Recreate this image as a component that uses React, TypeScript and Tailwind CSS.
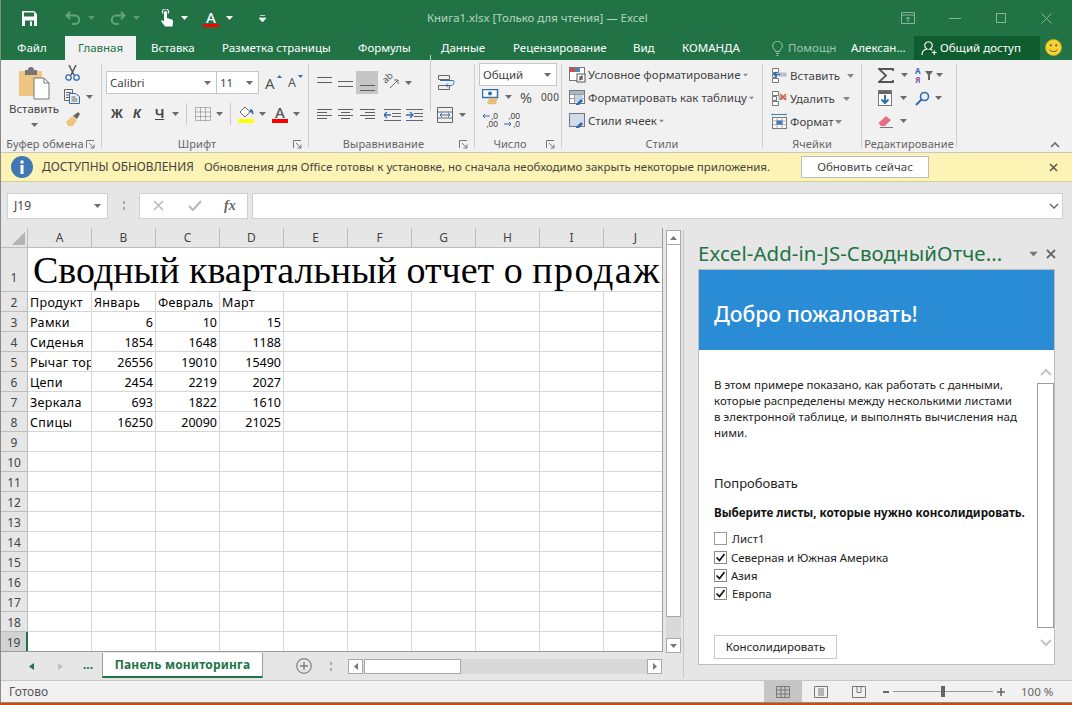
import React from "react";

const Caret = ({ c = "#6b6b6b", className = "" }: { c?: string; className?: string }) => (
  <svg width="7" height="4" viewBox="0 0 7 4" className={"shrink-0 " + className}><path d="M0 0h7L3.5 4z" fill={c} /></svg>
);
const Launcher = ({ className = "" }: { className?: string }) => (
  <svg width="9" height="9" viewBox="0 0 9 9" className={className}><path d="M.5 8V.5H8M3 3l5 5M8 4.5V8H4.5" fill="none" stroke="#777" /></svg>
);
const Lines = ({ rows, w = 15 }: { rows: [number, number][]; w?: number }) => (
  <svg width={w} height="14" viewBox={`0 0 ${w} 14`} className="shrink-0">
    {rows.map(([x1, x2], i) => (
      <path key={i} d={`M${x1} ${i * 3 + 1.5 + (4 - rows.length) * 3}H${x2}`} stroke="#5f5f5f" />
    ))}
  </svg>
);
const VAlign = ({ y }: { y: number }) => (
  <svg width="15" height="20" viewBox="0 0 15 20" className="shrink-0"><path d={`M0 ${y + 0.5}H15M0 ${y + 5.5}H15`} stroke="#5f5f5f" /></svg>
);
const Sep = ({ h = "h-[24px]", m = "mx-[5px]" }: { h?: string; m?: string }) => <div className={`${h} ${m} w-px bg-[#c8c8c8] shrink-0`} />;

const Group = ({ w, label, launcher, pr = "", children }: { w: string; label: string; launcher?: boolean; pr?: string; children: React.ReactNode }) => (
  <div className={`${w} h-[84px] shrink-0 border-r border-[#d0d0d0] flex flex-col`}>
    <div className="h-[72px] shrink-0">{children}</div>
    <div className={`h-[16px] shrink-0 flex items-center justify-center relative text-[11px] leading-[16px] text-[#666] tracking-[0.1px] ${pr}`}>
      {label}
      {launcher && <Launcher className="absolute right-[6px] top-[4px]" />}
    </div>
  </div>
);

const Combo = ({ w, text, cls = "" }: { w: string; text: string; cls?: string }) => (
  <div className={`${w} h-[23px] bg-white border border-[#c6c6c6] flex items-center pl-[3px] pr-[5px] justify-between text-[11.5px] text-[#444] ${cls}`}>
    <span>{text}</span>
    <Caret />
  </div>
);

const StyleIcon = ({ kind }: { kind: number }) => (
  <svg width="17" height="16" viewBox="0 0 17 16" className="shrink-0">
    <rect x=".5" y=".5" width="15" height="13" fill={kind === 2 ? "#cfdcec" : "#fff"} stroke="#777" />
    {kind === 0 && <><rect x="1" y="1" width="5" height="4" fill="#c8553b" /><rect x="6" y="1" width="5" height="4" fill="#4a86c5" /><rect x="8" y="7" width="8" height="8" fill="#fff" stroke="#555" /><path d="M10 10h4M10 12h4M13 8.5l-2 5" stroke="#333" /></>}
    {kind === 1 && <><path d="M1 4.5h14M1 8.5h14M5.5 1v12M10.5 1v12" stroke="#999" /><rect x="1" y="1" width="14" height="3" fill="#aab8c8" /><rect x="6" y="5" width="8" height="7" fill="#c0d2e6" /><path d="M7 14l5-5 2 2-4 4H7z" fill="#2f6db5" /></>}
    {kind === 2 && <path d="M7 14l5-5 2 2-4 4H7z" fill="#2f6db5" />}
  </svg>
);

const CellIcon = ({ kind }: { kind: number }) => (
  <svg width="17" height="17" viewBox="0 0 17 17" className="shrink-0">
    {kind < 2 && <><path d="M1.5 1.5h6v4h-6zM1.5 11.5h6v4h-6zM1.5 6.5h4v4h-4z" fill="#fff" stroke="#777" /><rect x="8" y="6" width="7" height="3" fill={kind === 0 ? "#b8cce4" : "#bbb"} stroke="#888" strokeWidth=".5" /></>}
    {kind === 0 && <path d="M9 7.5H3M5.5 5l-2.5 2.5L5.500 10" stroke="#2f6db5" strokeWidth="1.500" fill="none" />}
    {kind === 1 && <path d="M9 4l6 6M15 4l-6 6" stroke="#d9603f" strokeWidth="1.600" />}
    {kind === 2 && <><path d="M1 1.500h14M1 .5v2M15 .5v2" stroke="#3f7cbf" /><rect x="1.500" y="4.500" width="14" height="11" fill="#fff" stroke="#777" /><path d="M1.500 8h14M1.500 11.500h14M6 4.500v11M11 4.500v11" stroke="#aaa" /><rect x="5.500" y="7.500" width="6" height="4" fill="#3f7cbf" /></>}
  </svg>
);

const colLetters = ["A", "B", "C", "D", "E", "F", "G", "H", "I", "J"];
const table: Record<number, (string | number)[]> = {
  2: ["Продукт", "Январь", "Февраль", "Март"],
  3: ["Рамки", 6, 10, 15],
  4: ["Сиденья", 1854, 1648, 1188],
  5: ["Рычаг тор", 26556, 19010, 15490],
  6: ["Цепи", 2454, 2219, 2027],
  7: ["Зеркала", 693, 1822, 1610],
  8: ["Спицы", 16250, 20090, 21025],
};

const cellBorder = "border-r border-b border-[#d6d6d6]";

const Sheet = () => (
  <div className="w-[662px] h-[424px] overflow-hidden border-r border-b border-[#9c9c9c] bg-white grid grid-cols-[27px_repeat(10,64px)] grid-rows-[20px_44px_repeat(18,20px)] text-[12.5px] text-black">
    <div className="bg-[#e6e6e6] border-r border-b border-[#bcbcbc] flex items-end justify-end p-[2px]">
      <svg width="13" height="13" viewBox="0 0 13 13"><path d="M13 0v13H0z" fill="#b3b3b3" /></svg>
    </div>
    {colLetters.map((c) => (
      <div key={c} className="bg-[#e6e6e6] border-r border-b border-[#bcbcbc] flex items-center justify-center text-[#444] text-[12px]">{c}</div>
    ))}
    <div className="bg-[#e6e6e6] border-r border-b border-[#bcbcbc] flex items-end justify-center text-[12px] text-[#444] pb-[4px]">1</div>
    <div className="col-span-10 border-b border-[#d6d6d6] overflow-hidden whitespace-nowrap pl-[5px] text-[38px] leading-[44px] font-['Liberation_Serif',serif]">
      Сводный квартальный отчет о <span className="tracking-[1.5px]">продажах</span>
    </div>
    {Array.from({ length: 18 }, (_, i) => i + 2).map((r) => (
      <React.Fragment key={r}>
        <div className={`border-b flex items-center justify-center pt-[2px] text-[12px] text-[#444] ${r === 19 ? "bg-[#d2d2d2] border-r-2 border-r-[#217346] border-b-[#bcbcbc]" : "bg-[#e6e6e6] border-r border-[#bcbcbc]"}`}>{r}</div>
        {colLetters.map((_, c) => {
          const v = table[r]?.[c];
          const num = typeof v === "number";
          return (
            <div key={c} className={`${cellBorder} ${num ? "text-right pr-[2px]" : "pl-[2px] tracking-[0.35px]"} leading-[21px] whitespace-nowrap overflow-hidden`}>
              {v ?? ""}
            </div>
          );
        })}
      </React.Fragment>
    ))}
  </div>
);

const Box = ({ checked, label, ml = "ml-[4px]", h = "h-[18px]" }: { checked?: boolean; label: string; ml?: string; h?: string }) => (
  <div className={`flex items-start ${h}`}>
    <svg width="13" height="13" viewBox="0 0 13 13" className="shrink-0 mt-[2px]">
      <rect x=".5" y=".5" width="12" height="12" fill="#fff" stroke={checked ? "#8a8a8a" : "#9a9a9a"} />
      {checked && <path d="M2.500 6.500l3 3 5-6.500" fill="none" stroke="#111" strokeWidth="1.700" />}
    </svg>
    <span className={`${ml} text-[11.4px] leading-[18px] text-[#222]`}>{label}</span>
  </div>
);

export default function App() {
  return (
    <div className="w-[1072px] h-[705px] overflow-hidden flex flex-col font-['Noto_Sans',sans-serif] bg-[#c85000]">
      <div className="h-[703px] border-l border-b border-[#8a8a8a] flex flex-col bg-[#e6e6e6]">
        {/* title bar */}
        <div className="h-[36px] bg-[#217346] flex items-center shrink-0">
          <div className="w-[426px] flex items-center shrink-0">
            <svg width="15" height="15" viewBox="0 0 15 15" className="ml-[21px]">
              <path d="M0 0h12l3 3v12H0z" fill="#fff" /><rect x="2" y="1.500" width="10" height="4" fill="#217346" /><rect x="3" y="9.500" width="9" height="5.500" fill="#217346" /><rect x="8" y="10.500" width="2" height="4.500" fill="#fff" />
            </svg>
            <svg width="16" height="14" viewBox="0 0 16 14" className="ml-[28px]"><path d="M5 1L1.500 4.500 5 8M2 4.500h8a4.200 4.200 0 0 1 0 8.500H7" fill="none" stroke="#63a27f" strokeWidth="2" /></svg>
            <Caret c="#5c9a78" className="ml-[7px]" />
            <svg width="16" height="14" viewBox="0 0 16 14" className="ml-[15px]"><path d="M11 1l3.500 3.500L11 8M14 4.500H6a4.200 4.200 0 0 0 0 8.500h3" fill="none" stroke="#63a27f" strokeWidth="2" /></svg>
            <Caret c="#5c9a78" className="ml-[7px]" />
            <svg width="16" height="18" viewBox="0 0 16 18" className="ml-[19px]">
              <path d="M4 4.500a3 3 0 1 1 5 0" fill="none" stroke="#fff" strokeWidth="1.200" />
              <path d="M5 3.500a1.300 1.300 0 0 1 3 0V9l5 1.500c1 .5 1 1.500 1 2.500l-.5 4.500H6L2 12l1-1 2 1.500z" fill="#fff" />
            </svg>
            <Caret c="#fff" className="ml-[6px]" />
            <div className="ml-[15px] w-[16px] h-[17px] flex flex-col items-center">
              <span className="text-[15px] leading-[14px] text-white font-medium">A</span>
              <div className="w-[16px] h-[3px] bg-[#ff0000]" />
            </div>
            <Caret c="#fff" className="ml-[7px]" />
            <svg width="7" height="7" viewBox="0 0 7 7" className="ml-[26px]"><path d="M1 .5h5M0 3h7L3.500 7z" stroke="#fff" strokeWidth=".700" fill="#fff" /></svg>
          </div>
          <div className="text-[11.4px] text-[#b5d3c1] whitespace-nowrap">Книга1.xlsx [Только для чтения] — Excel</div>
          <div className="ml-auto flex items-center">
            <svg width="14" height="12" viewBox="0 0 14 12"><path d="M.5.500h13v11H.500zM.5 3h13M7 10V5M5 7l2-2 2 2" fill="none" stroke="#86b59b" /></svg>
            <div className="w-[12px] h-px bg-[#86b59b] ml-[34px]" />
            <div className="w-[10px] h-[10px] border border-[#86b59b] ml-[35px]" />
            <svg width="11" height="11" viewBox="0 0 11 11" className="ml-[35px] mr-[20px]"><path d="M.5.500l10 10M10.500.500l-10 10" stroke="#86b59b" /></svg>
          </div>
        </div>
        {/* tabs */}
        <div className="h-[24px] bg-[#217346] flex items-stretch shrink-0 text-[11.5px] text-white leading-[24px] whitespace-nowrap">
          <span className="ml-[16px] w-[28px]">Файл</span>
          <span className="ml-[20px] w-[71px] bg-[#f1f1f1] text-[#217346] text-center">Главная</span>
          <span className="ml-[15px] w-[42px]">Вставка</span>
          <span className="ml-[29px] w-[107px]">Разметка страницы</span>
          <span className="ml-[29px] w-[54px]">Формулы</span>
          <span className="ml-[29px] w-[43px]">Данные</span>
          <span className="ml-[29px] w-[91px]">Рецензирование</span>
          <span className="ml-[29px] w-[20px]">Вид</span>
          <span className="ml-[29px] w-[61px]">КОМАНДА</span>
          <div className="ml-[29px] flex items-center w-[64px] overflow-hidden text-[#9cc7ae]">
            <svg width="11" height="15" viewBox="0 0 11 15" className="shrink-0 mr-[5px]"><path d="M3.500 10.500C3 8 .7 7.500.7 5a4.800 4.800 0 0 1 9.600 0c0 2.500-2.300 3-2.800 5.500zM4 12.500h3M4.500 14.500h2" fill="none" stroke="#9cc7ae" /></svg>
            <span>Помощник</span>
          </div>
          <span className="ml-[15px] w-[63px]">Алексан...</span>
          <div className="w-[126px] bg-[#0f5c2f] flex items-center pl-[7px]">
            <svg width="16" height="16" viewBox="0 0 16 16" className="mr-[3px]"><path d="M1 15c0-3.500 2-5.500 5-6a3.800 3.800 0 1 1 3 0c1 .2 1.700.7 2.300 1.300M11 12.500h4.500M13.200 10.300V15" fill="none" stroke="#fff" strokeWidth="1.100" /></svg>
            <span>Общий доступ</span>
          </div>
          <svg width="17" height="17" viewBox="0 0 17 17" className="ml-[5px] mt-[3px]">
            <circle cx="8.500" cy="8.500" r="8" fill="#f6d32d" stroke="#d8ae1a" strokeWidth=".700" /><circle cx="5.800" cy="6.300" r="1.100" fill="#555" /><circle cx="11.200" cy="6.300" r="1.100" fill="#555" /><path d="M4.500 10.500c1.500 2.700 6.500 2.700 8 0" fill="none" stroke="#555" />
          </svg>
        </div>
        {/* ribbon */}
        <div className="h-[93px] bg-[#f1f1f1] border-b border-[#c6c6c6] pt-[4px] flex shrink-0 text-[#444] text-[11.5px] whitespace-nowrap">
          <Group w="w-[101px]" label="Буфер обмена" launcher pr="pr-[12px]">
            <div className="flex h-full">
              <div className="w-[62px] flex flex-col items-center pl-[4px]">
                <svg width="31" height="33" viewBox="0 0 31 33" className="mt-[3px]">
                  <path d="M0 4h23v25H0z" fill="#eec681" /><path d="M6 3h3a3 3 0 0 1 6 0h3v5H6z" fill="#767676" /><path d="M15 11h10l5 5v16H15z" fill="#fff" stroke="#777" /><path d="M25 11v5h5" fill="none" stroke="#777" />
                </svg>
                <span className="mt-[1px] leading-[16px]">Вставить</span>
                <Caret className="mt-[6px]" />
              </div>
              <div className="flex flex-col pl-[1px]">
                <svg width="16" height="16" viewBox="0 0 16 16" className="mt-[1px] ml-[1px]">
                  <path d="M4 0l5 10M11 0L6 10" stroke="#555" strokeWidth="1.500" /><circle cx="3.500" cy="12.500" r="2.700" fill="none" stroke="#2f6db5" strokeWidth="1.300" /><circle cx="11.500" cy="12.500" r="2.700" fill="none" stroke="#2f6db5" strokeWidth="1.300" />
                </svg>
                <div className="flex items-center mt-[8px]">
                  <svg width="16" height="15" viewBox="0 0 16 15"><path d="M.5.500h8v11h-8zM2 3.500h5M2 6h5M2 8.500h5" fill="none" stroke="#666" /><path d="M5.500 4.500h6l4 3v7h-10z" fill="#f1f1f1" stroke="#2f6db5" /><path d="M7.500 8h4M7.500 10h6M7.500 12h6" stroke="#666" /></svg>
                  <Caret className="ml-[6px]" />
                </div>
                <svg width="17" height="16" viewBox="0 0 17 16" className="mt-[7px]"><path d="M2 11l6-6 5 4-4 6H4z" fill="#eec681" /><path d="M9 5l5-4 2 2-3 5z" fill="#666" /></svg>
              </div>
            </div>
          </Group>
          <Group w="w-[207px]" label="Шрифт" launcher pr="pr-[16px]">
            <div className="pl-[4px] pt-[7px]">
              <div className="flex items-center h-[23px]">
                <Combo w="w-[111px]" text="Calibri" />
                <Combo w="w-[43px]" text="11" cls="-ml-px" />
                <span className="ml-[6px] relative w-[14px] text-[15px] leading-[20px] text-[#555]">A<svg width="5" height="3" viewBox="0 0 5 3" className="absolute right-[-3px] top-[2px]"><path d="M0 3h5L2.500 0z" fill="#2f6db5" /></svg></span>
                <span className="ml-[9px] relative w-[12px] text-[12.500px] leading-[20px] text-[#555]">A<svg width="5" height="3" viewBox="0 0 5 3" className="absolute right-[-3px] top-[2px]"><path d="M0 0h5L2.500 3z" fill="#2f6db5" /></svg></span>
              </div>
              <div className="flex items-center h-[22px] mt-[9px] font-['Liberation_Sans',sans-serif]">
                <span className="ml-[5px] w-[14px] font-bold text-[13px] text-[#444]">Ж</span>
                <span className="ml-[8px] w-[10px] font-bold italic text-[13px] text-[#444]">К</span>
                <span className="ml-[12px] w-[10px] font-bold text-[13px] text-[#444] underline">Ч</span>
                <Caret className="ml-[7px]" />
                <Sep h="h-[22px]" m="ml-[7px] mr-[8px]" />
                <svg width="16" height="14" viewBox="0 0 16 14"><path d="M.5.500h15v13H.500zM5.500.500v13M10.500.500v13M.5 5h15M.5 9.500h15" fill="none" stroke="#777" strokeDasharray="1 1" /></svg>
                <Caret className="ml-[5px]" />
                <Sep h="h-[22px]" m="ml-[7px] mr-[6px]" />
                <div className="w-[18px] flex flex-col items-center">
                  <svg width="15" height="13" viewBox="0 0 15 13"><path d="M1 6l5-5 5 5-5 5z" fill="#fff" stroke="#666" /><path d="M6 1V0M11 3c3 0 4 3 3 6-1-2-2-3-3-3z" fill="#2f6db5" /></svg>
                  <div className="w-[16px] h-[4px] bg-[#ffff00]" />
                </div>
                <Caret className="ml-[4px]" />
                <div className="ml-[6px] w-[16px] flex flex-col items-center">
                  <span className="text-[15px] leading-[13px] text-[#555] font-['Noto_Sans',sans-serif] font-medium">A</span>
                  <div className="w-[16px] h-[4px] bg-[#ff0000]" />
                </div>
                <Caret className="ml-[5px]" />
              </div>
            </div>
          </Group>
          <Group w="w-[166px]" label="Выравнивание" launcher pr="pr-[16px]">
            <div className="flex pl-[8px]">
              <div className="pt-[7px] flex flex-col">
                <div className="flex items-center h-[23px]">
                  <VAlign y={4} />
                  <span className="w-[6px]" />
                  <div className="w-[16px]"><VAlign y={8} /></div>
                  <div className="w-[22px] h-[23px] bg-[#c6c6c6] flex items-center justify-center ml-[2px]"><VAlign y={12} /></div>
                  <div className="w-[17px] h-[17px] ml-[5px] relative">
                    <span className="absolute left-[-1px] top-[-2px] text-[9.5px] leading-[12px] text-[#555] rotate-[-45deg]">ab</span>
                    <svg width="17" height="17" viewBox="0 0 17 17" className="absolute left-0 top-0"><path d="M7 14l8-8M15 6h-4M15 6v4" stroke="#666" fill="none" /></svg>
                  </div>
                  <Caret className="ml-[5px]" />
                  <Sep h="h-[56px]" m="ml-[18px] mr-[7px]" />
                  <svg width="17" height="16" viewBox="0 0 17 16"><path d="M.5.500h11v4h-11zM.5 10.500h11v4h-11z" fill="none" stroke="#666" /><path d="M2 5.500h13c2 0 1 5-2 5H8M10 8.500l-2 2 2 2" fill="none" stroke="#2f6db5" /></svg>
                </div>
                <div className="flex items-center h-[23px] mt-[9px]">
                  <Lines rows={[[0, 15], [0, 10], [0, 15], [0, 10]]} />
                  <span className="w-[6px]" />
                  <Lines rows={[[0, 15], [3, 12], [0, 15], [3, 12]]} />
                  <span className="w-[7px]" />
                  <Lines rows={[[0, 15], [5, 15], [0, 15], [5, 15]]} />
                  <svg width="17" height="14" viewBox="0 0 17 14" className="ml-[9px]"><path d="M0 1.500h17M8 5.500h9M8 8.500h9M0 12.500h17" stroke="#666" /><path d="M0 7h7M3 4L0 7l3 3" fill="none" stroke="#2f6db5" strokeWidth="1.300" /></svg>
                  <svg width="17" height="14" viewBox="0 0 17 14" className="ml-[5px]"><path d="M0 1.500h17M8 5.500h9M8 8.500h9M0 12.500h17" stroke="#666" /><path d="M0 7h7M4 4l3 3-3 3" fill="none" stroke="#2f6db5" strokeWidth="1.300" /></svg>
                  <span className="w-[14px]" />
                  <svg width="17" height="16" viewBox="0 0 17 16"><path d="M.5.500h15v15H.500zM.5 5h15M.5 11h15" fill="none" stroke="#666" /><path d="M3 8h10M5 6L3 8l2 2M11 6l2 2-2 2" fill="none" stroke="#2f6db5" /></svg>
                  <Caret className="ml-[5px]" />
                </div>
              </div>
            </div>
          </Group>
          <Group w="w-[87px]" label="Число" launcher pr="pr-[16px]">
            <div className="pl-[4px]">
              <Combo w="w-[78px]" text="Общий" cls="mt-[-1px]" />
              <div className="flex items-center h-[18px] mt-[2px] pl-[3px]">
                <svg width="17" height="17" viewBox="0 0 17 17"><rect x=".5" y=".5" width="15" height="8" fill="#fff" stroke="#2f6db5" strokeWidth="1.500" /><circle cx="8" cy="4.500" r="2" fill="#2f6db5" /><ellipse cx="11" cy="10.500" rx="4.500" ry="1.500" fill="#eec681" stroke="#c99a44" strokeWidth=".500" /><ellipse cx="10" cy="13.500" rx="4.500" ry="1.500" fill="#eec681" stroke="#c99a44" strokeWidth=".500" /></svg>
                <Caret className="ml-[6px]" />
                <span className="ml-[8px] w-[16px] text-[14.500px] leading-none text-[#555]">%</span>
                <span className="ml-[5px] text-[10px] leading-none text-[#444] tracking-[0.4px]">000</span>
              </div>
              <div className="flex items-center h-[18px] mt-[5px] pl-[3px] font-['Liberation_Sans',sans-serif]">
                <div className="w-[16px] relative text-[8.500px] leading-[8px] text-[#444] text-right"><div>,0</div><div>,00</div><svg width="8" height="6" viewBox="0 0 8 6" className="absolute left-0 top-[1px]"><path d="M8 3H1M3 1L1 3l2 2" stroke="#2f6db5" fill="none" /></svg></div>
                <div className="ml-[6px] w-[16px] relative text-[8.500px] leading-[8px] text-[#444] text-right"><div>,00</div><div>,0</div><svg width="8" height="6" viewBox="0 0 8 6" className="absolute left-0 top-[9px]"><path d="M0 3h7M5 1l2 2-2 2" stroke="#2f6db5" fill="none" /></svg></div>
              </div>
            </div>
          </Group>
          <Group w="w-[201px]" label="Стили">
            <div className="pl-[7px] pt-[3px] flex flex-col gap-[7px]">
              {["Условное форматирование", "Форматировать как таблицу", "Стили ячеек"].map((t, i) => (
                <div key={t} className="flex items-center h-[16px] leading-[16px]">
                  <StyleIcon kind={i} />
                  <span className="ml-[2px]">{t}</span>
                  <Caret c="#888" className="ml-[1px] scale-75" />
                </div>
              ))}
            </div>
          </Group>
          <Group w="w-[99px]" label="Ячейки">
            <div className="pl-[8px] pt-[3px] flex flex-col gap-[6px]">
              {[["Вставить", "ml-[7px]"], ["Удалить", "ml-[8px]"], ["Формат", "ml-[1px]"]].map(([t, m], i) => (
                <div key={t} className="flex items-center h-[17px] leading-[16px]">
                  <CellIcon kind={i} />
                  <span className="ml-[2px]">{t}</span>
                  <Caret c="#888" className={m} />
                </div>
              ))}
            </div>
          </Group>
          <Group w="w-[95px]" label="Редактирование">
            <div className="flex pl-[16px]">
              <div className="w-[37px] flex flex-col">
                <div className="flex items-center h-[20px] mt-[1px]"><svg width="16" height="15" viewBox="0 0 16 15"><path d="M15 3V1H1l7 6.500L1 14h14v-2" fill="none" stroke="#555" strokeWidth="1.800" /></svg><Caret className="ml-[7px]" /></div>
                <div className="flex items-center h-[20px] mt-[3px]"><svg width="15" height="16" viewBox="0 0 15 16"><rect x=".5" y=".5" width="13" height="15" fill="#fff" stroke="#777" /><rect x="1" y="1" width="12" height="3" fill="#666" /><path d="M7 5v8M3.500 9.500L7 13l3.500-3.500" fill="none" stroke="#2f6db5" strokeWidth="2" /></svg><Caret className="ml-[7px]" /></div>
                <div className="flex items-center h-[20px] mt-[3px]"><svg width="15" height="14" viewBox="0 0 15 14"><path d="M.5 9L8 2l5 4-6 6H3z" fill="#e46f83" /><path d="M2 13.500h13" stroke="#777" /></svg><Caret className="ml-[7px]" /></div>
              </div>
              <div className="flex flex-col">
                <div className="flex items-center h-[20px] mt-[1px]">
                  <div className="w-[9px] text-[8px] leading-[9px] font-bold"><div className="text-[#2f6db5]">А</div><div className="text-[#8e5aa8]">Я</div></div>
                  <svg width="8" height="9" viewBox="0 0 8 9" className="ml-[1px]"><path d="M0 0h8L5 4v5H3V4z" fill="#666" /></svg>
                  <Caret className="ml-[3px]" />
                </div>
                <div className="flex items-center h-[20px] mt-[3px]"><svg width="15" height="15" viewBox="0 0 15 15"><circle cx="9.500" cy="5.500" r="4" fill="none" stroke="#2f6db5" strokeWidth="1.600" /><path d="M6.500 8.500L1 14" stroke="#2f6db5" strokeWidth="2" /></svg><Caret className="ml-[5px]" /></div>
              </div>
            </div>
          </Group>
          <svg width="10" height="6" viewBox="0 0 10 6" className="ml-[93px] mt-[78px]"><path d="M1 5l4-4 4 4" fill="none" stroke="#666" strokeWidth="1.600" /></svg>
        </div>
        {/* update bar */}
        <div className="h-[29px] bg-[#fcf3b4] border-b border-[#d8cf96] flex items-center shrink-0 text-[11.5px] text-[#444] whitespace-nowrap">
          <svg width="22" height="22" viewBox="0 0 22 22" className="ml-[10px] shrink-0"><circle cx="11" cy="11" r="11" fill="#3f78b5" /><rect x="9.500" y="9" width="3" height="9" fill="#fff" /><rect x="9.500" y="4.500" width="3" height="3" fill="#fff" /></svg>
          <span className="ml-[9px] w-[152px] text-[11.85px]">ДОСТУПНЫ ОБНОВЛЕНИЯ</span>
          <span className="ml-[10px] w-[567px]">Обновления для Office готовы к установке, но сначала необходимо закрыть некоторые приложения.</span>
          <div className="ml-[30px] w-[128px] h-[22px] bg-white border border-[#bdbdbd] flex items-center justify-center">Обновить сейчас</div>
          <svg width="9" height="9" viewBox="0 0 9 9" className="ml-[120px]"><path d="M1 1l7 7M8 1L1 8" stroke="#555" strokeWidth="1.500" /></svg>
        </div>
        {/* formula bar */}
        <div className="h-[46px] flex items-center shrink-0 pl-[6px] pt-[1px] bg-[#e6e6e6]">
          <div className="w-[101px] h-[26px] bg-white border border-[#cfcfcf] flex items-center justify-between pl-[6px] pr-[6px] text-[12px] text-[#444]"><span>J19</span><Caret /></div>
          <div className="w-[31px] flex justify-center"><div className="w-[2px] h-[9px] border-y-[3px] border-[#aaa] bg-[#e6e6e6]" /></div>
          <div className="w-[109px] h-[26px] bg-white border border-[#cfcfcf] flex items-center pl-[13px]">
            <svg width="11" height="11" viewBox="0 0 11 11"><path d="M1 1l9 9M10 1l-9 9" stroke="#b8b8b8" strokeWidth="1.500" /></svg>
            <svg width="14" height="11" viewBox="0 0 14 11" className="ml-[24px]"><path d="M1 6l4 4 8-9" fill="none" stroke="#b8b8b8" strokeWidth="2" /></svg>
            <span className="ml-[22px] text-[14px] italic font-['Liberation_Serif',serif] text-[#666] font-bold">fx</span>
          </div>
          <div className="ml-[4px] w-[811px] h-[26px] bg-white border border-[#cfcfcf] flex items-center justify-end pr-[3px]">
            <svg width="10" height="6" viewBox="0 0 10 6"><path d="M1 1l4 4 4-4" fill="none" stroke="#666" strokeWidth="1.400" /></svg>
          </div>
        </div>
        {/* workspace */}
        <div className="h-[452px] flex shrink-0">
          <div className="w-[684px] flex flex-col shrink-0 relative">
            <div className="flex h-[425px]">
              <Sheet />
              <div className="ml-[3px] w-[15px] h-[423px] mt-[2px] flex flex-col shrink-0">
                <div className="h-[15px] bg-white border border-[#a8a8a8] flex items-center justify-center"><svg width="7" height="4" viewBox="0 0 7 4"><path d="M0 4h7L3.500 0z" fill="#777" /></svg></div>
                <div className="flex-1 bg-white border-x border-b border-[#a8a8a8]" />
                <div className="h-[21px] bg-[#d9d9d9]" />
                <div className="h-[15px] bg-white border border-[#a8a8a8] flex items-center justify-center"><Caret c="#777" /></div>
              </div>
              <div className="ml-[2px] w-px h-[448px] mt-[2px] bg-[#c8c8c8] shrink-0" />
            </div>
            {/* sheet tabs */}
            <div className="h-[27px] flex text-[12px]">
              <svg width="5" height="7" viewBox="0 0 5 7" className="ml-[28px] mt-[10px]"><path d="M5 0v7L0 3.500z" fill="#217346" /></svg>
              <svg width="5" height="7" viewBox="0 0 5 7" className="ml-[24px] mt-[10px]"><path d="M0 0v7l5-3.500z" fill="#c0c0c0" /></svg>
              <span className="ml-[20px] w-[19px] mt-[4px] font-bold text-[#217346] leading-[16px]">...</span>
              <div className="w-[161px] h-[25px] bg-white border-x border-[#9c9c9c] border-b-2 border-b-[#217346] flex items-center justify-center font-bold text-[#217346] tracking-[0.2px]">Панель мониторинга</div>
              <svg width="16" height="16" viewBox="0 0 16 16" className="ml-[33px] mt-[5px]"><circle cx="8" cy="8" r="7.300" fill="none" stroke="#808080" strokeWidth="1.200" /><path d="M8 4v8M4 8h8" stroke="#808080" strokeWidth="1.400" /></svg>
              <div className="ml-[18px] mt-[9px] w-[2px] h-[9px] border-y-[3px] border-[#aaa]" />
              <div className="ml-[16px] mt-[6px] w-[314px] h-[15px] bg-[#d9d9d9] flex">
                <div className="w-[15px] bg-white border border-[#a8a8a8] flex items-center justify-center"><svg width="4" height="7" viewBox="0 0 4 7"><path d="M4 0v7L0 3.500z" fill="#777" /></svg></div>
                <div className="w-[97px] ml-px bg-white border border-[#a8a8a8]" />
                <div className="ml-auto w-[15px] bg-white border border-[#a8a8a8] flex items-center justify-center"><svg width="4" height="7" viewBox="0 0 4 7"><path d="M0 0v7l4-3.500z" fill="#777" /></svg></div>
              </div>
            </div>
          </div>
          {/* task pane */}
          <div className="flex-1 min-w-0 pl-[13px] pr-[17px]">
            <div className="h-[41px] flex items-center text-[#217346] pt-[10px] relative">
              <span className="text-[20.4px] tracking-[0.1px] whitespace-nowrap">Excel-Add-in-JS-СводныйОтче...</span>
              <Caret c="#777" className="ml-auto scale-125 mr-[9px]" />
              <svg width="10" height="10" viewBox="0 0 10 10" className="mr-[-1px]"><path d="M1 1l8 8M9 1L1 9" stroke="#666" strokeWidth="1.800" /></svg>
            </div>
            <div className="h-[396px] bg-white border border-[#bdbdbd] flex flex-col">
              <div className="h-[80px] shrink-0 bg-[#2a8cd4] text-white text-[21.2px] font-medium flex items-center pl-[15px] pt-[7px]">Добро пожаловать!</div>
              <div className="flex-1 flex">
                <div className="flex-1 pl-[15px] pt-[27px] text-[#222]">
                  <p className="text-[11.500px] leading-[16px] w-[306px]">В этом примере показано, как работать с данными, которые распределены между несколькими листами в&nbsp;электронной таблице, и выполнять вычисления над ними.</p>
                  <p className="text-[13px] leading-[18px] mt-[33px]">Попробовать</p>
                  <p className="text-[11.600px] leading-[18px] font-bold text-[#111] mt-[12px] whitespace-nowrap">Выберите листы, которые нужно консолидировать.</p>
                  <div className="mt-[8px] flex flex-col">
                    <Box label="Лист1" ml="ml-[5px]" h="h-[19px]" />
                    <Box checked label="Северная и Южная Америка" />
                    <Box checked label="Азия" />
                    <Box checked label="Европа" ml="ml-[5px]" />
                  </div>
                  <div className="mt-[32px] w-[123px] h-[24px] border border-[#c8c8c8] flex items-center justify-center text-[11.500px] text-[#222]">Консолидировать</div>
                </div>
                <div className="w-[18px] shrink-0 flex flex-col items-center">
                  <svg width="12" height="8" viewBox="0 0 12 8" className="mt-[18px] ml-[2px]"><path d="M1 7l5-5 5 5" fill="none" stroke="#c4c4c4" strokeWidth="2" /></svg>
                  <div className="w-[17px] h-[245px] mt-[7px] border border-[#9c9c9c] bg-white" />
                  <svg width="12" height="8" viewBox="0 0 12 8" className="mt-[11px] ml-[2px]"><path d="M1 1l5 5 5-5" fill="none" stroke="#c4c4c4" strokeWidth="2" /></svg>
                </div>
              </div>
            </div>
          </div>
        </div>
        {/* status bar */}
        <div className="flex-1 bg-[#f1f1f1] border-t border-[#c6c6c6] flex items-center text-[12px] text-[#555]">
          <span className="ml-[8px] w-[36px]">Готово</span>
          <div className="ml-[719px] w-[38px] h-full bg-[#c6c6c6] flex items-center justify-center">
            <svg width="14" height="12" viewBox="0 0 14 12"><path d="M.5.500h13v11H.500zM.5 4h13M.5 8h13M5 .5v11M9 .5v11" fill="none" stroke="#777" /></svg>
          </div>
          <svg width="14" height="12" viewBox="0 0 14 12" className="ml-[12px]"><path d="M.5.500h13v11H.500zM4 3h6M4 5h6M4 7h6M4 9h6" fill="none" stroke="#777" /></svg>
          <svg width="14" height="12" viewBox="0 0 14 12" className="ml-[24px]"><path d="M.5.500h13v11H.500zM5 .5v6h4v-6" fill="none" stroke="#777" /></svg>
          <div className="ml-[17px] w-[6px] h-[2px] bg-[#666]" />
          <div className="ml-[4px] w-[100px] h-px bg-[#999] relative"><div className="absolute left-[48px] top-[-5px] w-[4px] h-[11px] bg-[#666]" /></div>
          <svg width="8" height="8" viewBox="0 0 8 8" className="ml-[4px]"><path d="M4 0v8M0 4h8" stroke="#666" strokeWidth="1.600" /></svg>
          <span className="ml-[16px] text-[11.500px] text-[#666]">100 %</span>
        </div>
      </div>
    </div>
  );
}
